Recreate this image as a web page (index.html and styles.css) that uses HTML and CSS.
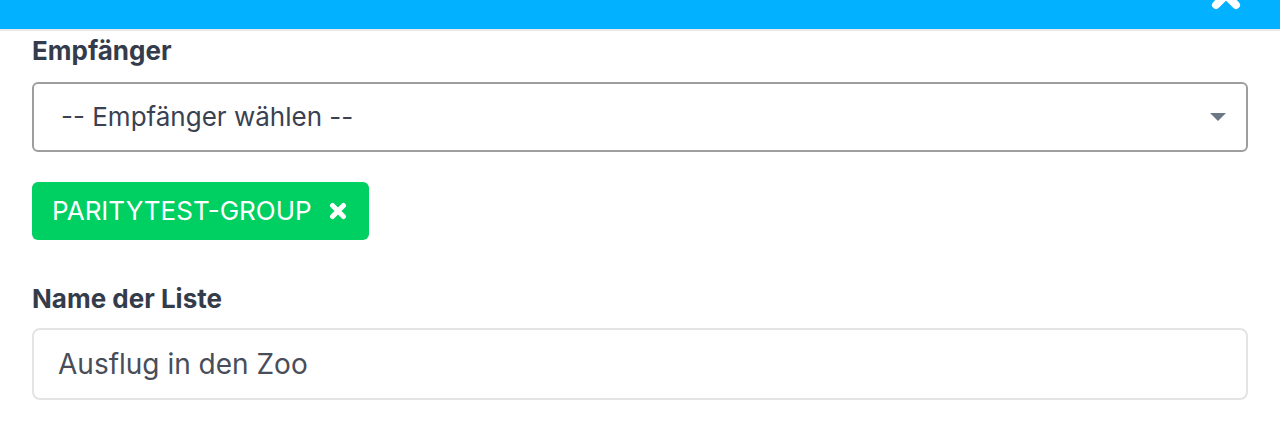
FILE: index.html
```html
<!DOCTYPE html>
<html lang="de">
<head>
<meta charset="utf-8">
<title>Liste</title>
<link rel="stylesheet" href="styles.css">
</head>
<body>
<header class="modal-header">
  <span class="modal-title">Liste</span>
  <svg class="modal-close" viewBox="0 0 32 32" width="32" height="32" aria-hidden="true">
    <path d="M6 6 L26 26 M26 6 L6 26" stroke="#fff" stroke-width="8" stroke-linecap="round" fill="none"/>
  </svg>
</header>
<main class="modal-body">
  <div class="field">
    <label class="field-label">Empfänger</label>
    <div class="select-box">
      <span class="select-text">-- Empfänger wählen --</span>
      <svg class="select-caret" viewBox="0 0 16 8" width="16" height="8" aria-hidden="true">
        <path d="M0 0 H16 L8 8 Z" fill="#6b7785"/>
      </svg>
    </div>
  </div>
  <div class="tags">
    <span class="tag">PARITYTEST-GROUP
      <svg class="tag-x" viewBox="0 0 18 18" width="18" height="18" aria-hidden="true">
        <path d="M3.5 3.5 L14.5 14.5 M14.5 3.5 L3.5 14.5" stroke="#fff" stroke-width="5" stroke-linecap="round" fill="none"/>
      </svg>
    </span>
  </div>
  <div class="field field-second">
    <label class="field-label">Name der Liste</label>
    <input class="text-input" type="text" value="Ausflug in den Zoo">
  </div>
</main>
</body>
</html>
```
FILE: styles.css
```css
* { box-sizing: border-box; }

html, body {
  margin: 0;
  padding: 0;
  background: #ffffff;
  font-family: Inter, "Noto Sans", "Liberation Sans", sans-serif;
  overflow: hidden;
}

.modal-header {
  display: flex;
  justify-content: space-between;
  align-items: flex-start;
  height: 62px;
  margin-top: -31px;
  padding: 0 38px 0 66px;
  background: #02b1ff;
  border-bottom: 2px solid #e8e8e8;
  overflow: hidden;
}

.modal-title {
  font-size: 24px;
  font-weight: 700;
  line-height: 24px;
  color: #ffffff;
  margin-top: 7px;
}

.modal-close {
  display: block;
  margin-top: 10px;
}

.modal-body {
  padding: 2px 32px 0 32px;
}

.field {
  display: flex;
  flex-direction: column;
}

.field-label {
  font-size: 26px;
  font-weight: 700;
  line-height: 36px;
  color: #343c4c;
  margin-bottom: 13px;
}

.select-box {
  display: flex;
  align-items: center;
  justify-content: space-between;
  height: 70px;
  padding: 0 20px 0 27px;
  border: 2px solid #9e9e9e;
  border-radius: 6px;
  background: #ffffff;
}

.select-text {
  font-size: 26px;
  line-height: 32px;
  color: #3a4252;
}

.select-caret {
  display: block;
}

.tags {
  display: flex;
  margin-top: 30px;
}

.tag {
  display: inline-flex;
  align-items: center;
  gap: 17px;
  height: 58px;
  padding: 0 22px 0 20px;
  background: #00d062;
  border-radius: 6px;
  color: #ffffff;
  font-size: 26px;
  line-height: 32px;
}

.tag-x {
  display: block;
}

.field-second {
  margin-top: 41px;
}

.field-second .field-label {
  margin-bottom: 11px;
}

.text-input {
  height: 72px;
  padding: 0 24px;
  border: 2px solid #e4e4e4;
  border-radius: 8px;
  background: #ffffff;
  font-family: Inter, "Noto Sans", "Liberation Sans", sans-serif;
  font-size: 28px;
  color: #484d59;
  outline: none;
}
```
